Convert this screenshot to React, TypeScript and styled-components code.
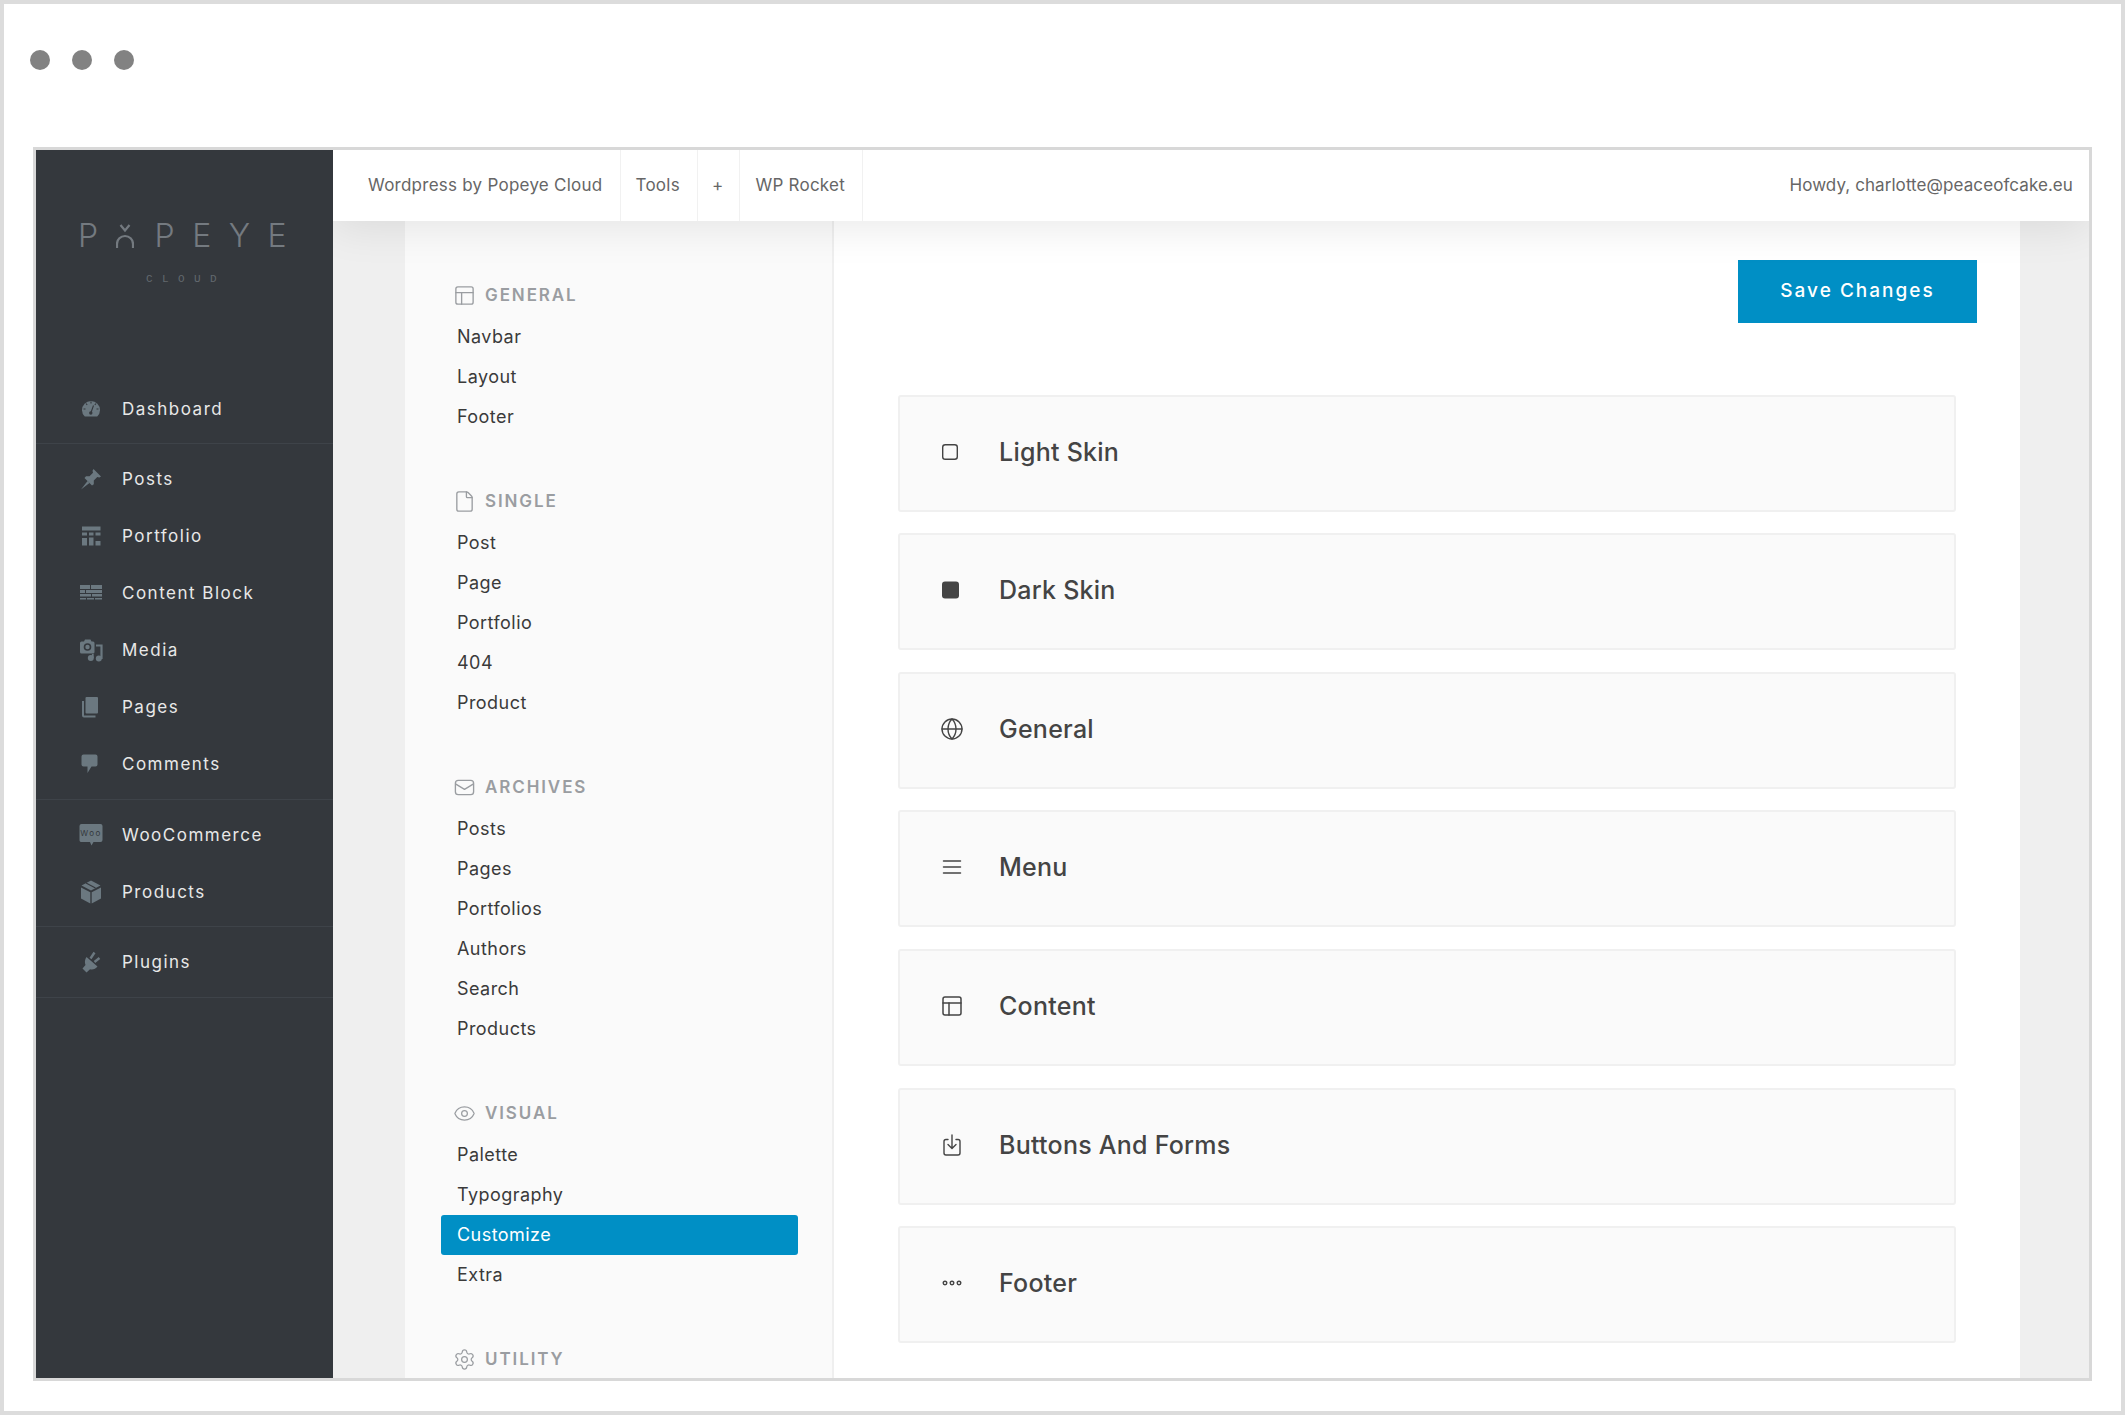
import React from "react";
import styled, { createGlobalStyle } from "styled-components";
import { Eye, File, Globe, PanelsTopLeft, Settings } from "lucide-react";

const BLUE = "#008fc5";
const FONT = `Inter, "Liberation Sans", sans-serif`;
const ICON = "#6b7880";
const SIDE = "#34383d";

const GlobalStyle = createGlobalStyle`
  html, body { margin: 0; padding: 0; background: #fff; }
  * { box-sizing: border-box; }
  body { font-family: ${FONT}; }
`;

/* sidebar icons, 24 box */
const Gauge = () => (
  <svg width="24" height="24" viewBox="0 0 24 24">
    <path d="M5.800 19.500a9 9 0 1 1 12.400 0z" fill={ICON} />
    <path d="M12 4.500v2M7 6.500l1.200 1.500M17 6.500l-1.200 1.500M4.500 12h2M17.500 12h2M14.500 8.500l-2.300 6.500" stroke={SIDE} strokeWidth="1.100" fill="none" />
    <circle cx="11.800" cy="16" r="1.700" fill={SIDE} />
  </svg>
);
const Pin = () => (
  <svg width="24" height="24" viewBox="0 0 24 24">
    <path d="M14.500 2 22 9.500 20.300 10.500 18.300 10 14.800 13.500 14.800 17.200 13 18.500 5.500 11 7 9.300 10.500 9.300 14 5.800 13.500 3.800Z" fill={ICON} />
    <path d="M8.500 14 2 22.500 10.500 16Z" fill={ICON} />
  </svg>
);
const Blocks = () => (
  <svg width="24" height="24" viewBox="0 0 24 24" fill={ICON}>
    <rect x="3" y="2.500" width="18.500" height="4" />
    <rect x="3" y="8.500" width="5" height="3" />
    <rect x="10" y="8.500" width="4.500" height="3" />
    <rect x="16.500" y="8.500" width="5" height="3" />
    <rect x="3" y="14" width="5" height="7.500" />
    <rect x="10" y="13.500" width="4.500" height="8" />
    <rect x="16.500" y="17" width="5" height="4.500" />
  </svg>
);
const Bricks = () => (
  <svg width="24" height="24" viewBox="0 0 24 24" fill={ICON}>
    <rect x="1" y="4" width="10" height="4" />
    <rect x="12" y="4" width="11" height="4" />
    <rect x="1" y="9" width="5" height="3" />
    <rect x="7" y="9" width="16" height="3" />
    <rect x="1" y="13" width="11" height="2.500" />
    <rect x="13" y="13" width="10" height="2.500" />
    <rect x="1" y="17" width="6" height="1.500" />
    <rect x="8" y="17" width="7" height="1.500" />
    <rect x="16" y="17" width="7" height="1.500" />
  </svg>
);
const MediaIcon = () => (
  <svg width="24" height="24" viewBox="0 0 24 24">
    <path d="M2.500 3.500h2.500l1-2h5.500l1 2h1.500a1.500 1.500 0 0 1 1.500 1.500v9a1.500 1.500 0 0 1-1.500 1.500h-11.500a1.500 1.500 0 0 1-1.500-1.500V5a1.500 1.500 0 0 1 1.500-1.500z" fill={ICON} />
    <circle cx="8.500" cy="9" r="3.800" fill={SIDE} />
    <circle cx="8.500" cy="9" r="2.200" fill={ICON} />
    <path d="M17 7.500h5.500v13.500" stroke={ICON} strokeWidth="2.200" fill="none" />
    <circle cx="19.800" cy="20.500" r="3" fill={ICON} />
    <circle cx="11.800" cy="20" r="3" fill={ICON} />
    <path d="M13.800 20v-4" stroke={ICON} strokeWidth="1.800" />
  </svg>
);
const Sheets = () => (
  <svg width="24" height="24" viewBox="0 0 24 24">
    <rect x="6.500" y="2" width="12.500" height="16.500" rx="1" fill={ICON} />
    <path d="M4 6v14.500a1 1 0 0 0 1 1h11.500" stroke={ICON} strokeWidth="2" fill="none" />
  </svg>
);
const Bubble = () => (
  <svg width="24" height="24" viewBox="0 0 24 24">
    <path d="M4.500 2.500h12a2 2 0 0 1 2 2v8a2 2 0 0 1-2 2h-4L8.500 21V14.500h-4a2 2 0 0 1-2-2v-8a2 2 0 0 1 2-2z" fill={ICON} />
  </svg>
);
const Woo = () => (
  <svg width="24" height="24" viewBox="0 0 24 24">
    <path d="M2.500 1h19A2 2 0 0 1 23.500 3v14a2 2 0 0 1-2 2h-7l-2 3.500-1.500-3.500h-8A2 2 0 0 1 .5 17V3A2 2 0 0 1 2.500 1z" fill={ICON} />
    <text x="12" y="13" fontSize="8" textAnchor="middle" fill={SIDE} fontFamily={FONT}>Woo</text>
  </svg>
);
const Box = () => (
  <svg width="24" height="24" viewBox="0 0 24 24" fill={ICON}>
    <path d="M12 0.500 21.500 5.500 12 10.500 2.500 5.500Z" />
    <path d="M2 7.500 11.300 12.300V23.500L2 18.500Z" />
    <path d="M22 7.500 12.700 12.300V23.500L22 18.500Z" />
    <path d="M7 3 16.500 8" stroke={SIDE} strokeWidth="1.200" />
  </svg>
);
const Plug = () => (
  <svg width="24" height="24" viewBox="0 0 24 24">
    <path d="M7.500 7 18.500 16.500c-2 2.700-5 3.500-7.500 2.700L7.500 22.500 3.500 18.500l3-3.500C5.500 12.500 5.700 9.500 7.500 7z" fill={ICON} />
    <path d="M11.500 8.500l4-6M15.500 12l5-4" stroke={ICON} strokeWidth="2.400" fill="none" />
  </svg>
);

/* card + header line icons */
const Line = styled.svg`
  fill: none;
  stroke: currentColor;
  stroke-linecap: round;
  stroke-linejoin: round;
`;
const LightSquare = () => (
  <Line width="24" height="24" viewBox="0 0 24 24" strokeWidth="1.400">
    <rect x="2.700" y="4.700" width="14.600" height="14.600" rx="2.500" />
  </Line>
);
const DarkSquare = () => (
  <svg width="24" height="24" viewBox="0 0 24 24">
    <rect x="2" y="3.500" width="17" height="17" rx="3" fill="#444" />
  </svg>
);
const Bars = () => (
  <Line width="24" height="24" viewBox="0 0 24 24" strokeWidth="1.500">
    <path d="M3.500 6h17M3.500 12h17M3.500 18h17" />
  </Line>
);
const Tray = () => (
  <Line width="24" height="24" viewBox="0 0 24 24" strokeWidth="1.400">
    <path d="M8 6.500H6a2 2 0 0 0-2 2V20a2 2 0 0 0 2 2h12a2 2 0 0 0 2-2V8.500a2 2 0 0 0-2-2h-2" />
    <path d="M12 2v13M8 11.500l4 4 4-4" />
  </Line>
);
const Dots = () => (
  <Line width="24" height="24" viewBox="0 0 24 24" strokeWidth="1.400">
    <circle cx="5" cy="12" r="1.800" />
    <circle cx="12" cy="12" r="1.800" />
    <circle cx="19" cy="12" r="1.800" />
  </Line>
);
const Envelope = () => (
  <Line width="23" height="23" viewBox="0 0 24 24" strokeWidth="1.400">
    <rect x="2.500" y="4.500" width="19" height="15" rx="3" />
    <path d="M3 8.500l9 5.500 9-5.500" />
  </Line>
);
const LogoMark = () => (
  <LogoO viewBox="0 0 18 24" width="18" height="24">
    <path d="M4.500 1 9 6.500 13.500 1M1 24V20a8 8 0 0 1 16 0V24" fill="none" stroke="#747a80" strokeWidth="2.200" />
  </LogoO>
);

const SIDE_GROUPS = [
  [{ label: "Dashboard", icon: <Gauge /> }],
  [
    { label: "Posts", icon: <Pin /> },
    { label: "Portfolio", icon: <Blocks /> },
    { label: "Content Block", icon: <Bricks /> },
    { label: "Media", icon: <MediaIcon /> },
    { label: "Pages", icon: <Sheets /> },
    { label: "Comments", icon: <Bubble /> },
  ],
  [
    { label: "WooCommerce", icon: <Woo /> },
    { label: "Products", icon: <Box /> },
  ],
  [{ label: "Plugins", icon: <Plug /> }],
];

const SECTIONS = [
  { title: "GENERAL", icon: <PanelsTopLeft size={23} strokeWidth={1.4} />, items: ["Navbar", "Layout", "Footer"] },
  { title: "SINGLE", icon: <File size={23} strokeWidth={1.4} />, items: ["Post", "Page", "Portfolio", "404", "Product"] },
  { title: "ARCHIVES", icon: <Envelope />, items: ["Posts", "Pages", "Portfolios", "Authors", "Search", "Products"] },
  { title: "VISUAL", icon: <Eye size={23} strokeWidth={1.3} />, items: ["Palette", "Typography", "Customize", "Extra"] },
  { title: "UTILITY", icon: <Settings size={23} strokeWidth={1.3} />, items: [] },
];

const CARDS = [
  { label: "Light Skin", icon: <LightSquare /> },
  { label: "Dark Skin", icon: <DarkSquare /> },
  { label: "General", icon: <Globe size={24} strokeWidth={1.4} /> },
  { label: "Menu", icon: <Bars /> },
  { label: "Content", icon: <PanelsTopLeft size={24} strokeWidth={1.5} /> },
  { label: "Buttons And Forms", icon: <Tray /> },
  { label: "Footer", icon: <Dots /> },
];

export default function App() {
  return (
    <>
      <GlobalStyle />
      <Window>
        <Lights>
          <Light />
          <Light />
          <Light />
        </Lights>
        <Frame>
          <Sidebar>
            <LogoWord>
              P<LogoMark />PEYE
            </LogoWord>
            <LogoSub>CLOUD</LogoSub>
            <SideNav>
              {SIDE_GROUPS.map((group) => (
                <SideGroup key={group[0].label}>
                  {group.map((item) => (
                    <SideRow key={item.label}>
                      <SideIcon>{item.icon}</SideIcon>
                      {item.label}
                    </SideRow>
                  ))}
                </SideGroup>
              ))}
            </SideNav>
          </Sidebar>
          <Column>
            <TopBar>
              <TopItem $first>Wordpress by Popeye Cloud</TopItem>
              <TopItem>Tools</TopItem>
              <TopItem $narrow>+</TopItem>
              <TopItem>WP Rocket</TopItem>
              <Howdy>Howdy, charlotte@peaceofcake.eu</Howdy>
            </TopBar>
            <Body>
              <SettingsNav>
                {SECTIONS.map((section) => (
                  <Section key={section.title}>
                    <SectionHead>
                      <HeadIcon>{section.icon}</HeadIcon>
                      {section.title}
                    </SectionHead>
                    {section.items.length > 0 && (
                      <SectionList>
                        {section.items.map((item) => (
                          <SectionItem key={item} $active={item === "Customize"}>
                            {item}
                          </SectionItem>
                        ))}
                      </SectionList>
                    )}
                  </Section>
                ))}
              </SettingsNav>
              <Main>
                <Toolbar>
                  <SaveButton>Save Changes</SaveButton>
                </Toolbar>
                <Cards>
                  {CARDS.map((card) => (
                    <Card key={card.label}>
                      <CardIcon>{card.icon}</CardIcon>
                      <CardLabel>{card.label}</CardLabel>
                    </Card>
                  ))}
                </Cards>
              </Main>
            </Body>
          </Column>
        </Frame>
      </Window>
    </>
  );
}

const Window = styled.div`
  width: 2125px;
  height: 1415px;
  border: 4px solid #dcdcdc;
  background: #fff;
  padding: 46px 29px 30px;
  display: flex;
  flex-direction: column;
  overflow: hidden;
`;

const Lights = styled.div`
  display: flex;
  gap: 22px;
  margin: 0 0 77px -3px;
`;

const Light = styled.span`
  width: 20px;
  height: 20px;
  border-radius: 50%;
  background: #828282;
`;

const Frame = styled.div`
  flex: 1;
  min-height: 0;
  display: flex;
  border: 3px solid #d8d8d8;
  overflow: hidden;
`;

const Sidebar = styled.aside`
  width: 297px;
  flex: none;
  background: ${SIDE};
  padding-top: 70px;
  position: relative;
  z-index: 2;
`;

const LogoWord = styled.div`
  display: flex;
  align-items: flex-end;
  height: 32px;
  padding-left: 42px;
  font-size: 32px;
  line-height: 32px;
  font-weight: 300;
  letter-spacing: 17.5px;
  color: #747a80;
`;

const LogoO = styled.svg`
  flex: none;
  margin: 0 21px 4px 0;
`;

const LogoSub = styled.div`
  margin-top: 20px;
  padding-left: 110px;
  font-family: "Liberation Mono", monospace;
  font-size: 11px;
  line-height: 14px;
  letter-spacing: 9.4px;
  color: #62686e;
`;

const SideNav = styled.nav`
  margin-top: 87.5px;
`;

const SideGroup = styled.div`
  padding: 6px 0 6.5px;
  border-bottom: 1px solid #3e4349;
`;

const SideRow = styled.div`
  height: 57px;
  display: flex;
  align-items: center;
  gap: 19px;
  padding: 1px 0 0 43px;
  font-size: 17px;
  letter-spacing: 1.5px;
  color: #e8e8e8;
`;

const SideIcon = styled.span`
  display: flex;
  width: 24px;
  height: 24px;
  flex: none;
`;

const Column = styled.div`
  flex: 1;
  min-width: 0;
  display: flex;
  flex-direction: column;
`;

const TopBar = styled.header`
  height: 71px;
  flex: none;
  display: flex;
  align-items: stretch;
  background: #fff;
  position: relative;
  z-index: 1;
  box-shadow: 0 6px 44px rgba(0, 0, 0, 0.09);
  font-size: 17px;
  letter-spacing: 0.25px;
  color: #666;
`;

const TopItem = styled.div<{ $first?: boolean; $narrow?: boolean }>`
  display: flex;
  align-items: center;
  padding: 0 ${(p) => (p.$narrow ? "16px" : "17px")} 2px ${(p) => (p.$first ? "35px" : p.$narrow ? "14px" : "15px")};
  border-right: 1px solid #f1f1f1;
`;

const Howdy = styled.div`
  margin-left: auto;
  padding: 0 16px 2px 0;
  display: flex;
  align-items: center;
  letter-spacing: 0.08px;
`;

const Body = styled.div`
  flex: 1;
  min-height: 0;
  display: flex;
  padding: 0 69px 0 72px;
  background: #efefef;
`;

const SettingsNav = styled.div`
  width: 429px;
  flex: none;
  padding-top: 64px;
  background: #fafafa;
  border-right: 2px solid #efefef;
  overflow: hidden;
`;

const Section = styled.section`
  margin-bottom: 54px;
`;

const SectionHead = styled.div`
  display: flex;
  align-items: center;
  gap: 9px;
  height: 20px;
  padding-left: 48px;
  font-size: 17px;
  font-weight: 600;
  letter-spacing: 1.9px;
  color: #9a9da1;
`;

const HeadIcon = styled.span`
  display: flex;
  align-items: center;
  justify-content: center;
  width: 23px;
  height: 20px;
  color: #9a9da1;
`;

const SectionList = styled.div`
  margin: 12px 0 0 36px;
  width: 357px;
`;

const SectionItem = styled.div<{ $active?: boolean }>`
  height: 40px;
  display: flex;
  align-items: center;
  padding: 0 0 2px 16px;
  border-radius: 3px;
  font-size: 18px;
  letter-spacing: 0.45px;
  color: ${(p) => (p.$active ? "#fff" : "#3a3a3a")};
  background: ${(p) => (p.$active ? BLUE : "transparent")};
`;

const Main = styled.main`
  flex: 1;
  min-width: 0;
  background: #fff;
  padding: 39px 64px 0;
`;

const Toolbar = styled.div`
  display: flex;
  justify-content: flex-end;
  margin: 0 -21px 71.5px 0;
`;

const SaveButton = styled.button`
  width: 239px;
  height: 63px;
  border: 0;
  padding: 0 0 2px;
  background: ${BLUE};
  color: #fff;
  font-family: ${FONT};
  font-size: 19px;
  font-weight: 500;
  letter-spacing: 2px;
`;

const Cards = styled.div`
  display: grid;
  gap: 21.67px;
`;

const Card = styled.div`
  height: 117px;
  display: flex;
  align-items: center;
  padding: 0 0 3px 40px;
  background: #fafafa;
  border: 2px solid #f0f0f0;
  border-radius: 3px;
`;

const CardIcon = styled.span`
  display: flex;
  width: 59px;
  flex: none;
  color: #444;
`;

const CardLabel = styled.span`
  font-size: 25px;
  font-weight: 500;
  letter-spacing: 0.25px;
  color: #444;
`;
